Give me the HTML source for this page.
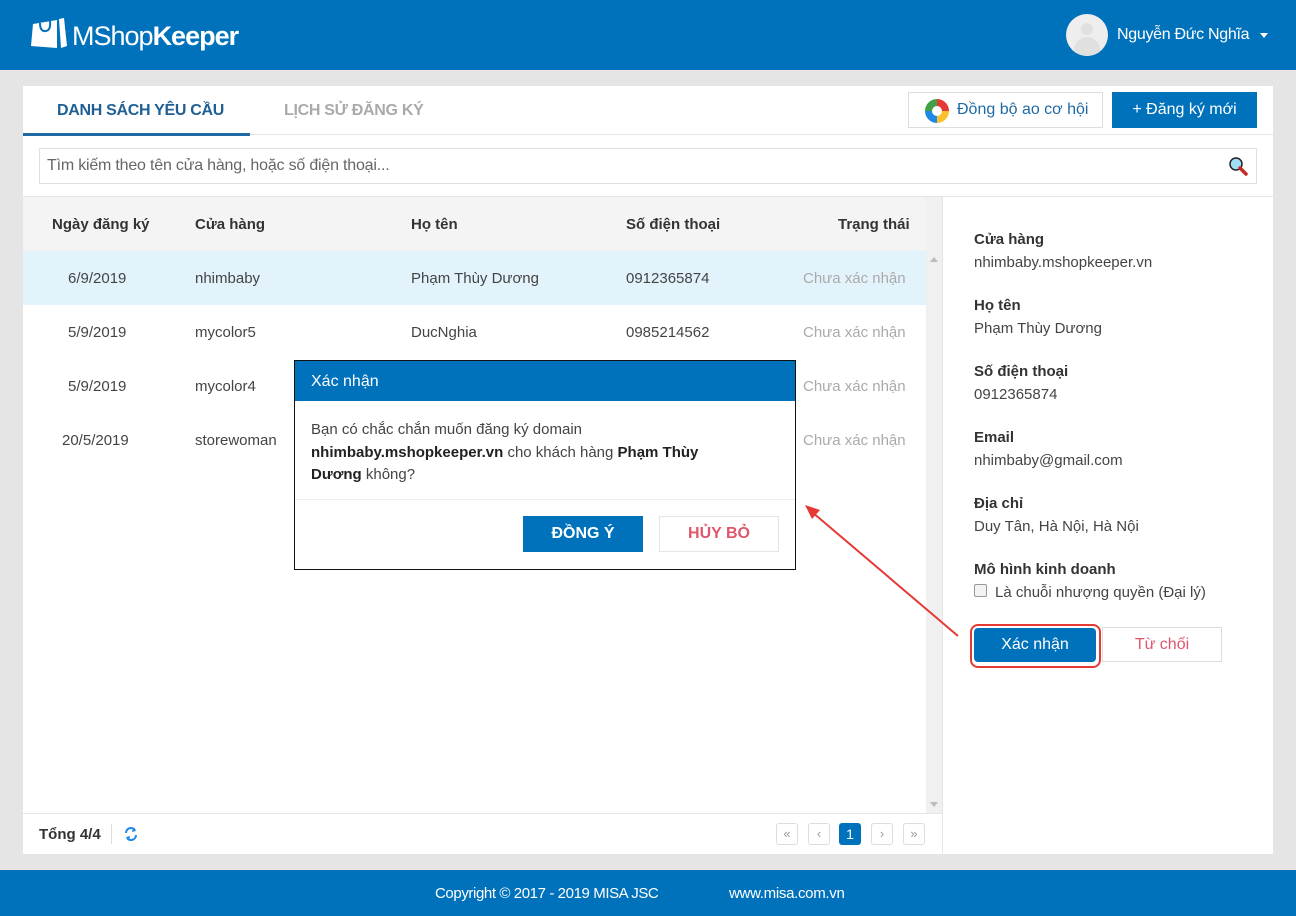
<!DOCTYPE html>
<html><head><meta charset="utf-8"><style>
*{margin:0;padding:0;box-sizing:border-box}
body{width:1296px;height:916px;background:#e5e5e5;font-family:"Liberation Sans",sans-serif;position:relative;overflow:hidden;color:#333}
.a{position:absolute;white-space:nowrap}
.hdr{left:0;top:0;width:1296px;height:70px;background:#0072bc}
.ftr{left:0;top:870px;width:1296px;height:46px;background:#0072bc;color:#fff;font-size:15px}
.panel{left:23px;top:86px;width:1250px;height:768px;background:#fff}
.th{font-size:15px;font-weight:bold;color:#333;top:216px}
.td{font-size:15px;color:#444}
.st{color:#aaa}
.lbl{font-size:15px;font-weight:bold;color:#333;left:974px}
.val{font-size:15px;color:#444;left:974px}
.pg{width:22px;height:22px;border:1px solid #ddd;border-radius:3px;top:823px;font-size:13px;color:#999;text-align:center;line-height:20px;background:#fff}
</style></head><body>
<div class="a hdr"></div>
<svg class="a" style="left:31px;top:16px" width="36" height="34" viewBox="0 0 36 34"><path d="M2 8 L26 4 L26 32 L0 30 Z" fill="#fff"/><path d="M28 3 L33 2 L36 30 L30 32 Z" fill="#fff"/><path d="M9 7 Q9 16 15 15 Q20 14 19 5" stroke="#0072bc" stroke-width="2" fill="none"/></svg>
<div class="a" style="left:72px;top:21px;font-size:27px;color:#fff;letter-spacing:-1px"><span style="font-weight:normal">MShop</span><b>Keeper</b></div>
<div class="a" style="left:1066px;top:14px;width:42px;height:42px;border-radius:50%;background:#eee;overflow:hidden"><div class="a" style="left:15px;top:9px;width:12px;height:12px;border-radius:50%;background:#e0e0e0"></div><div class="a" style="left:8px;top:23px;width:26px;height:20px;border-radius:13px 13px 0 0;background:#e0e0e0"></div></div>
<div class="a" style="left:1117px;top:26px;font-size:16px;color:#fff;letter-spacing:-0.3px">Nguyễn Đức Nghĩa</div>
<div class="a" style="left:1260px;top:33px;border-left:4px solid transparent;border-right:4px solid transparent;border-top:5px solid #fff"></div>

<div class="a panel"></div>
<div class="a" style="left:23px;top:134px;width:1250px;height:1px;background:#e5e5e5"></div>
<div class="a" style="left:57px;top:102px;font-size:16px;font-weight:bold;color:#1f5f94;letter-spacing:-0.3px">DANH SÁCH YÊU CẦU</div>
<div class="a" style="left:23px;top:133px;width:227px;height:3px;background:#1f6aa5"></div>
<div class="a" style="left:284px;top:102px;font-size:16px;font-weight:bold;color:#aaa;letter-spacing:-0.3px">LỊCH SỬ ĐĂNG KÝ</div>
<div class="a" style="left:908px;top:92px;width:195px;height:36px;border:1px solid #ddd;background:#fff"></div>
<div class="a" style="left:925px;top:99px;width:24px;height:24px;border-radius:50%;background:conic-gradient(#e53935 0 25%,#fbc02d 0 50%,#1e88e5 0 75%,#43a047 0)"></div>
<div class="a" style="left:932px;top:106px;width:10px;height:10px;border-radius:50%;background:#fff"></div>
<div class="a" style="left:957px;top:101px;font-size:16px;color:#1f6aa5">Đồng bộ ao cơ hội</div>
<div class="a" style="left:1112px;top:92px;width:145px;height:36px;background:#0072bc;color:#fff;font-size:16px;text-align:center;line-height:36px">+ Đăng ký mới</div>
<div class="a" style="left:39px;top:148px;width:1218px;height:36px;border:1px solid #e0e0e0"></div>
<div class="a" style="left:47px;top:157px;font-size:16px;color:#666;letter-spacing:-0.2px">Tìm kiếm theo tên cửa hàng, hoặc số điện thoại...</div>
<svg class="a" style="left:1228px;top:156px" width="20" height="20"><circle cx="8" cy="8" r="6" fill="#9fe0f5" stroke="#222" stroke-width="1.5"/><path d="M12 12 L18 18" stroke="#c62828" stroke-width="3.5" stroke-linecap="round"/></svg>

<div class="a" style="left:23px;top:196px;width:1250px;height:1px;background:#e5e5e5"></div>
<div class="a" style="left:23px;top:197px;width:903px;height:54px;background:#f4f4f4"></div>
<div class="a" style="left:926px;top:197px;width:16px;height:616px;background:#f0f0f0"></div>
<div class="a" style="left:930px;top:257px;border-left:4px solid transparent;border-right:4px solid transparent;border-bottom:5px solid #bbb"></div>
<div class="a" style="left:930px;top:802px;border-left:4px solid transparent;border-right:4px solid transparent;border-top:5px solid #bbb"></div>
<div class="a" style="left:942px;top:197px;width:1px;height:657px;background:#e5e5e5"></div>
<div class="a th" style="left:52px">Ngày đăng ký</div>
<div class="a th" style="left:195px">Cửa hàng</div>
<div class="a th" style="left:411px">Họ tên</div>
<div class="a th" style="left:626px">Số điện thoại</div>
<div class="a th" style="left:838px">Trạng thái</div>
<div class="a" style="left:23px;top:251px;width:903px;height:54px;background:#e3f3fc"></div>
<div class="a td" style="left:68px;top:270px">6/9/2019</div><div class="a td" style="left:195px;top:270px">nhimbaby</div><div class="a td" style="left:411px;top:270px">Phạm Thùy Dương</div><div class="a td" style="left:626px;top:270px">0912365874</div><div class="a td st" style="left:803px;top:270px">Chưa xác nhận</div>
<div class="a td" style="left:68px;top:324px">5/9/2019</div><div class="a td" style="left:195px;top:324px">mycolor5</div><div class="a td" style="left:411px;top:324px">DucNghia</div><div class="a td" style="left:626px;top:324px">0985214562</div><div class="a td st" style="left:803px;top:324px">Chưa xác nhận</div>
<div class="a td" style="left:68px;top:378px">5/9/2019</div><div class="a td" style="left:195px;top:378px">mycolor4</div><div class="a td st" style="left:803px;top:378px">Chưa xác nhận</div>
<div class="a td" style="left:62px;top:432px">20/5/2019</div><div class="a td" style="left:195px;top:432px">storewoman</div><div class="a td st" style="left:803px;top:432px">Chưa xác nhận</div>

<div class="a" style="left:23px;top:813px;width:919px;height:1px;background:#e5e5e5"></div>
<div class="a" style="left:39px;top:826px;font-size:15px;font-weight:bold;color:#333">Tổng 4/4</div>
<div class="a" style="left:111px;top:824px;width:1px;height:20px;background:#ddd"></div>
<svg class="a" style="left:123px;top:826px" width="16" height="16"><path d="M3 7 A5 5 0 0 1 12 4 M13 9 A5 5 0 0 1 4 12" stroke="#1e88e5" stroke-width="2" fill="none"/><path d="M10 1 L13 5 L9 6Z M6 15 L3 11 L7 10Z" fill="#1e88e5"/></svg>
<div class="a pg" style="left:776px">«</div><div class="a pg" style="left:808px">‹</div>
<div class="a pg" style="left:839px;background:#0072bc;border-color:#0072bc;color:#fff;font-size:14px">1</div>
<div class="a pg" style="left:871px">›</div><div class="a pg" style="left:903px">»</div>

<div class="a lbl" style="top:231px">Cửa hàng</div><div class="a val" style="top:254px">nhimbaby.mshopkeeper.vn</div>
<div class="a lbl" style="top:297px">Họ tên</div><div class="a val" style="top:320px">Phạm Thùy Dương</div>
<div class="a lbl" style="top:363px">Số điện thoại</div><div class="a val" style="top:386px">0912365874</div>
<div class="a lbl" style="top:429px">Email</div><div class="a val" style="top:452px">nhimbaby@gmail.com</div>
<div class="a lbl" style="top:495px">Địa chỉ</div><div class="a val" style="top:518px">Duy Tân, Hà Nội, Hà Nội</div>
<div class="a lbl" style="top:561px">Mô hình kinh doanh</div>
<div class="a" style="left:974px;top:584px;width:13px;height:13px;border:1px solid #999;border-radius:2px;background:#f3f3f3"></div>
<div class="a val" style="left:995px;top:584px">Là chuỗi nhượng quyền (Đại lý)</div>
<div class="a" style="left:970px;top:624px;width:131px;height:44px;border:2px solid #e53935;border-radius:8px"></div>
<div class="a" style="left:974px;top:628px;width:122px;height:34px;background:#0072bc;border-radius:4px;color:#fff;font-size:16px;text-align:center;line-height:34px">Xác nhận</div>
<div class="a" style="left:1102px;top:627px;width:120px;height:35px;border:1px solid #ddd;color:#e0566a;font-size:16px;text-align:center;line-height:34px">Từ chối</div>

<svg class="a" style="left:0;top:0" width="1296" height="916"><line x1="958" y1="636" x2="812" y2="512" stroke="#e53935" stroke-width="2"/><path d="M805 505 L820 510 L812 519 Z" fill="#e53935"/></svg>

<div class="a" style="left:294px;top:360px;width:502px;height:210px;border:1px solid #111;background:#fff"></div>
<div class="a" style="left:295px;top:361px;width:500px;height:40px;background:#0072bc;color:#fff;font-size:16px;padding:12px 0 0 16px">Xác nhận</div>
<div class="a" style="left:311px;top:419px;font-size:15px;color:#444;line-height:22.5px;white-space:normal;width:420px">Bạn có chắc chắn muốn đăng ký domain<br><b style="color:#222">nhimbaby.mshopkeeper.vn</b> cho khách hàng <b style="color:#222">Phạm Thùy Dương</b> không?</div>
<div class="a" style="left:295px;top:499px;width:500px;height:1px;background:#eee"></div>
<div class="a" style="left:523px;top:516px;width:120px;height:36px;background:#0072bc;color:#fff;font-size:16px;font-weight:bold;text-align:center;line-height:36px">ĐỒNG Ý</div>
<div class="a" style="left:659px;top:516px;width:120px;height:36px;border:1px solid #e5e5e5;color:#e0566a;font-size:16px;font-weight:bold;text-align:center;line-height:34px">HỦY BỎ</div>

<div class="a ftr"><span class="a" style="left:435px;top:15px;letter-spacing:-0.4px">Copyright © 2017 - 2019 MISA JSC</span><span class="a" style="left:729px;top:15px;letter-spacing:-0.3px">www.misa.com.vn</span></div>
</body></html>
